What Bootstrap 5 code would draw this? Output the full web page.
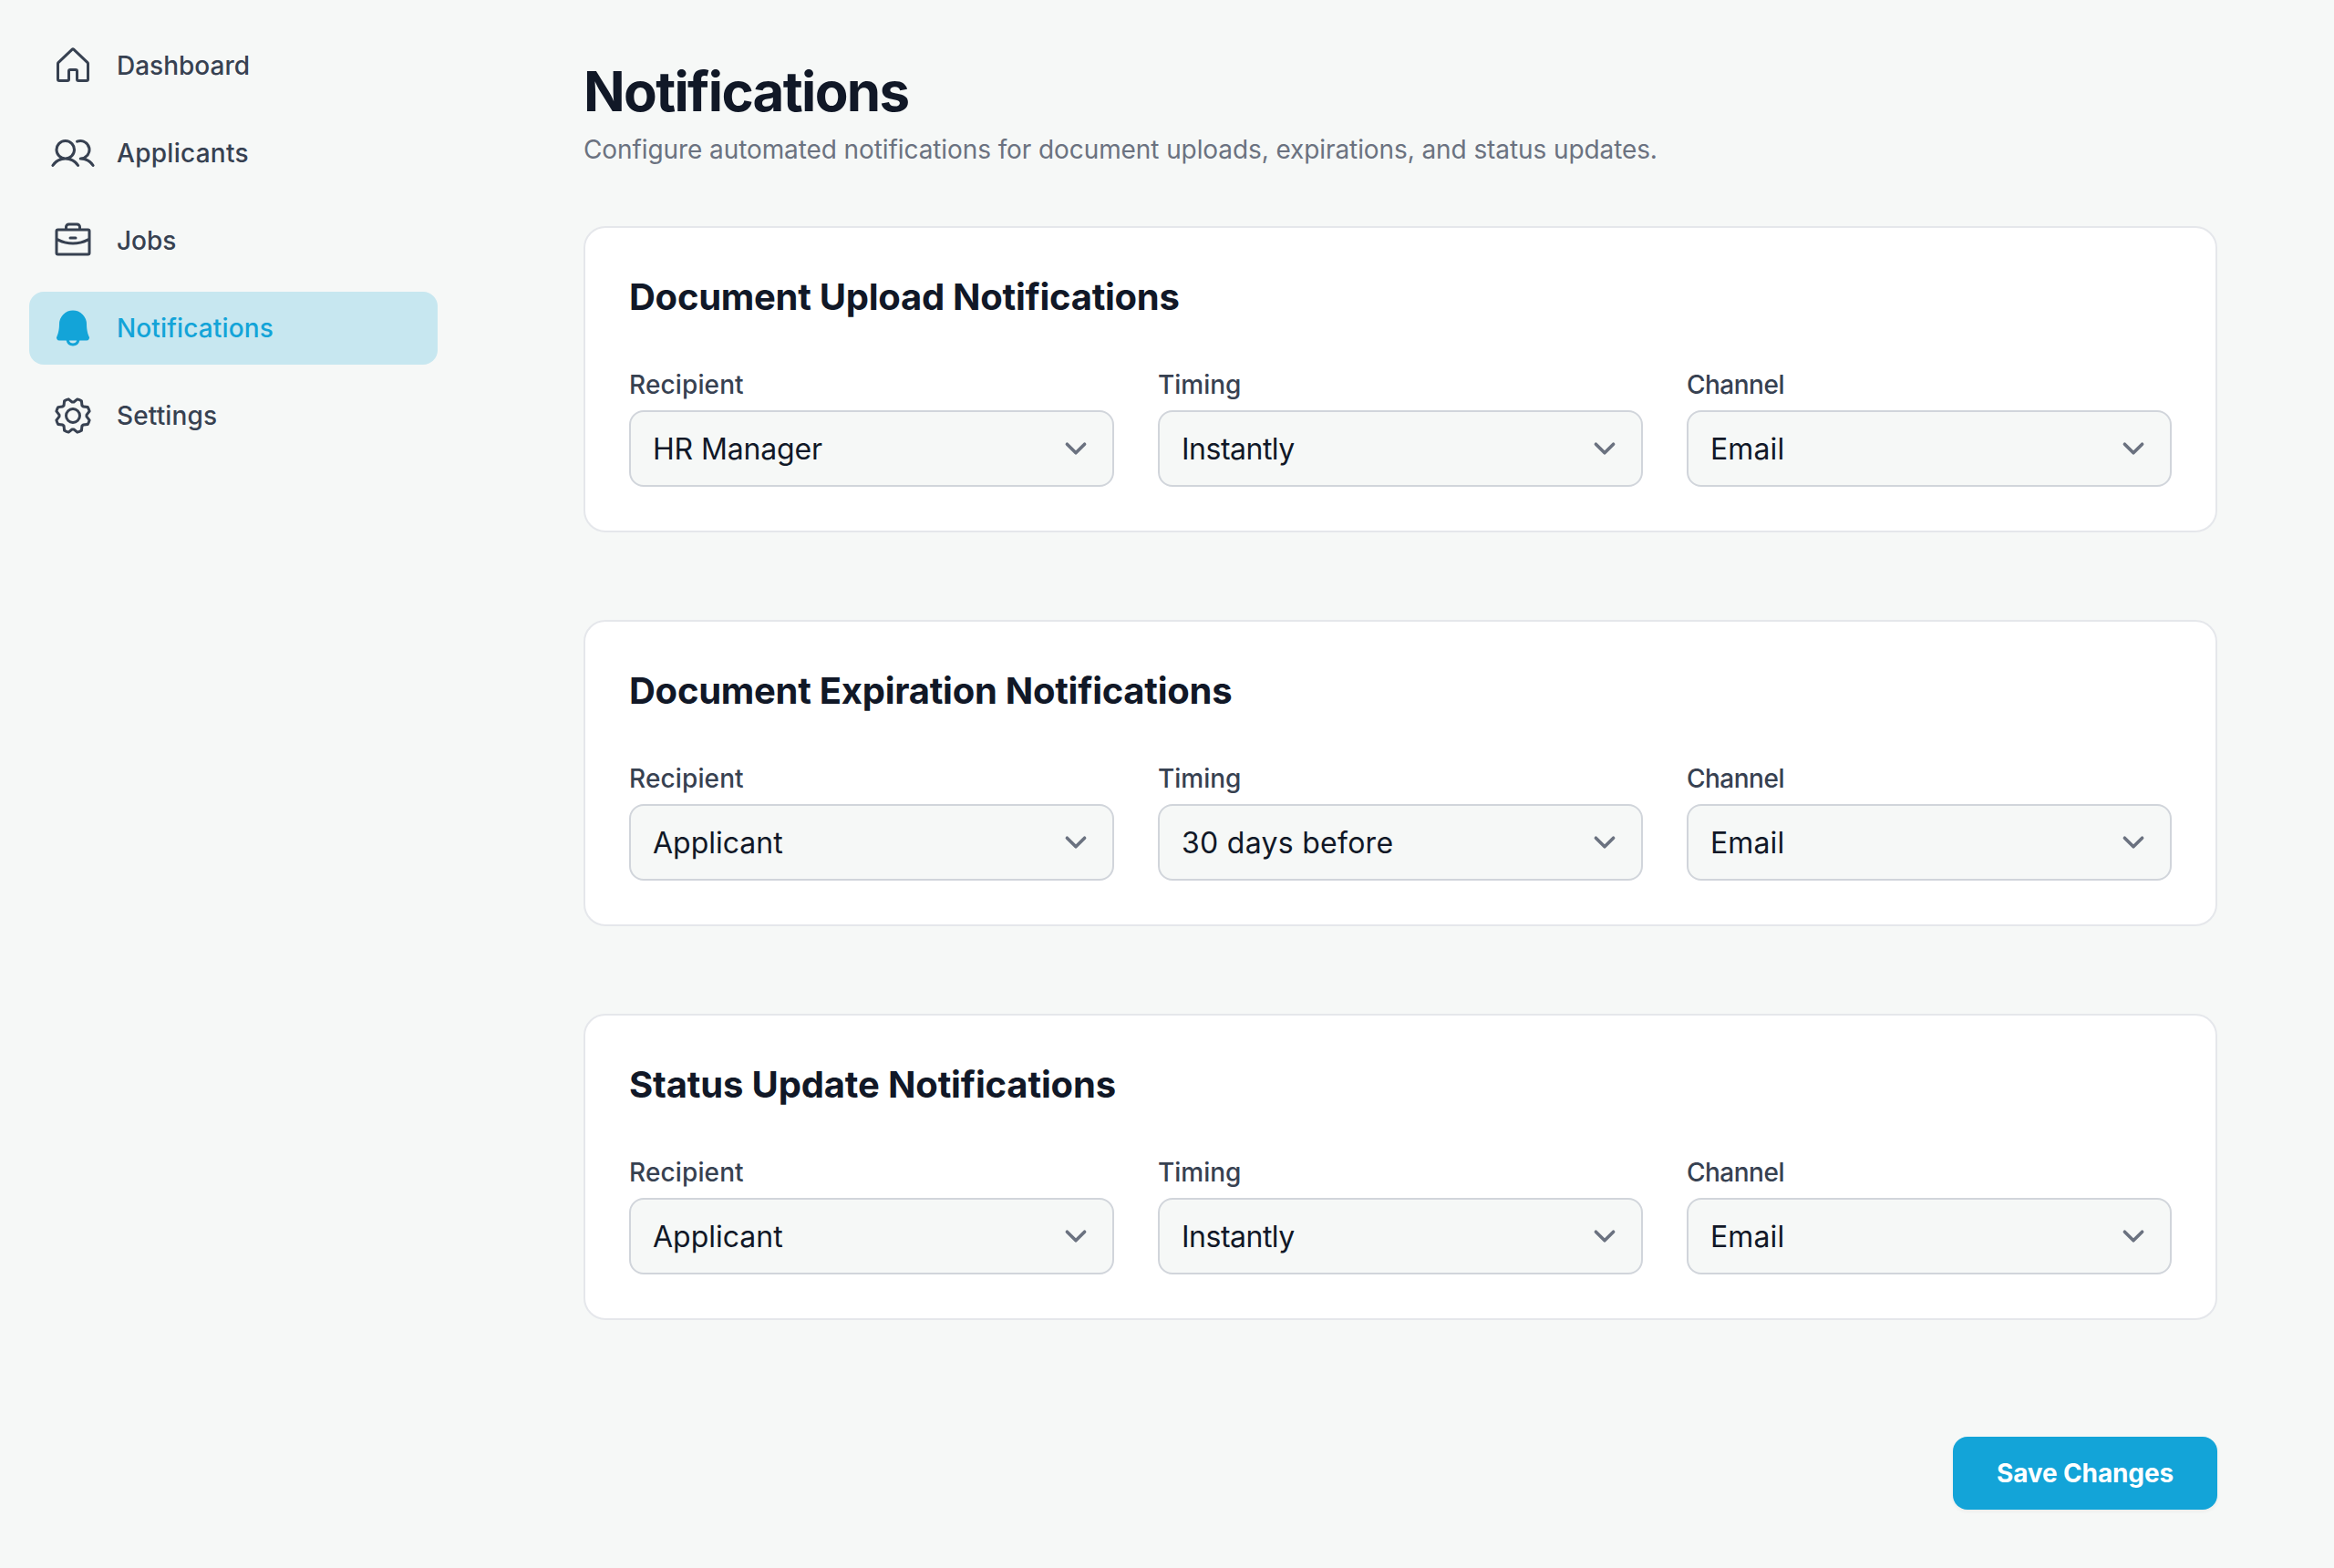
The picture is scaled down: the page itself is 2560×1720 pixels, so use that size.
<!DOCTYPE html>
<html lang="en">
<head>
<meta charset="utf-8">
<meta name="viewport" content="width=device-width, initial-scale=1">
<title>Notifications</title>
<link href="https://cdn.jsdelivr.net/npm/bootstrap@5.3.0/dist/css/bootstrap.min.css" rel="stylesheet">
<style>
  :root { --accent: #13a4d8; --ink: #111827; --slate: #374151; --muted: #6b7280; --canvas: #f6f8f7; }
  body { font-family: Inter, "Liberation Sans", sans-serif; background: var(--canvas); color: var(--ink); font-size: 28px; line-height: 40px; }
  .side { width: 512px; padding: 32px; }
  .side .nav { gap: 16px; }
  .side .nav-link { display: flex; align-items: center; gap: 24px; height: 80px; padding: 0 24px; border-radius: 16px; color: var(--slate); font-weight: 500; }
  .side .nav-link.active { background: #c7e7f0; color: var(--accent); }
  .side svg { width: 48px; height: 48px; fill: currentColor; flex: none; }
  .content { padding: 64px 128px; }
  .page-title { font-size: 60px; line-height: 72px; font-weight: 700; letter-spacing: -1.67px; margin: 0 0 8px; }
  .page-sub { color: var(--muted); margin: 0 0 64px; letter-spacing: -0.09px; }
  .stack { gap: 96px; }
  .panel { border: 2px solid #e5e7eb; border-radius: 24px; background: #fff; color: var(--ink); }
  .panel .card-body { padding: 48px; }
  .panel-title { font-size: 40px; line-height: 56px; font-weight: 700; letter-spacing: -0.27px; margin: 0 0 48px; }
  .fields { --bs-gutter-x: 48px; }
  .fields .form-label { display: block; margin: 0 0 8px; color: var(--slate); font-weight: 500; }
  .fields .form-select { height: 84px; padding: 17px 80px 15px 24px; border: 2px solid #d1d5db; border-radius: 16px; font-size: 32px; line-height: 48px; color: var(--ink); background-color: var(--canvas); background-position: right 16px center; background-size: 48px 48px;
    background-image: url("data:image/svg+xml,%3csvg xmlns='http://www.w3.org/2000/svg' fill='none' viewBox='0 0 20 20'%3e%3cpath stroke='%236b7280' stroke-linecap='round' stroke-linejoin='round' stroke-width='1.5' d='M6 8l4 4 4-4'/%3e%3c/svg%3e"); }
  .actions { margin-top: 128px; }
  .btn-save { background: var(--accent); color: #fff; border: 0; border-radius: 16px; height: 80px; padding: 0 48px; font-size: 28px; line-height: 40px; font-weight: 700; letter-spacing: -0.13px; box-shadow: 0 2px 4px rgba(0,0,0,.05); }
  /* tracking steps */
  .tk-n5.tk-n5 { letter-spacing: -0.5px; }
  .tk-n2.tk-n2 { letter-spacing: -0.16px; }
  .tk-p1.tk-p1 { letter-spacing: 0.13px; }
  .tk-p3.tk-p3 { letter-spacing: 0.28px; }
</style>
<script src="https://cdn.jsdelivr.net/npm/bootstrap@5.3.0/dist/js/bootstrap.bundle.min.js"></script>
</head>
<body>
<div class="d-flex min-vh-100">
  <aside class="side flex-shrink-0">
    <nav class="nav flex-column">
      <a class="nav-link" href="#"><svg viewBox="0 0 256 256"><path d="M218.83,103.77l-80-75.48a1.14,1.14,0,0,1-.11-.11,16,16,0,0,0-21.53,0l-.11.11L37.17,103.77A16,16,0,0,0,32,115.55V208a16,16,0,0,0,16,16H96a16,16,0,0,0,16-16V160h32v48a16,16,0,0,0,16,16h48a16,16,0,0,0,16-16V115.55A16,16,0,0,0,218.83,103.77ZM208,208H160V160a16,16,0,0,0-16-16H112a16,16,0,0,0-16,16v48H48V115.55l.11-.1L128,40l79.9,75.43.11.1Z"/></svg><span>Dashboard</span></a>
      <a class="nav-link" href="#"><svg viewBox="0 0 256 256"><path d="M117.25,157.92a60,60,0,1,0-66.5,0A95.83,95.83,0,0,0,3.53,195.63a8,8,0,1,0,13.4,8.74,80,80,0,0,1,134.14,0,8,8,0,0,0,13.4-8.74A95.83,95.83,0,0,0,117.25,157.92ZM40,108a44,44,0,1,1,44,44A44.05,44.05,0,0,1,40,108Zm210.14,98.7a8,8,0,0,1-11.07-2.33A79.83,79.83,0,0,0,172,168a8,8,0,0,1,0-16,44,44,0,1,0-16.34-84.87,8,8,0,1,1-5.94-14.85,60,60,0,0,1,55.53,105.64,95.83,95.83,0,0,1,47.22,37.71A8,8,0,0,1,250.14,206.7Z"/></svg><span class="tk-p3">Applicants</span></a>
      <a class="nav-link" href="#"><svg viewBox="0 0 256 256"><path d="M216,56H176V48a24,24,0,0,0-24-24H104A24,24,0,0,0,80,48v8H40A16,16,0,0,0,24,72V200a16,16,0,0,0,16,16H216a16,16,0,0,0,16-16V72A16,16,0,0,0,216,56ZM96,48a8,8,0,0,1,8-8h48a8,8,0,0,1,8,8v8H96ZM216,72v41.61A184,184,0,0,1,128,136a184.07,184.07,0,0,1-88-22.38V72Zm0,128H40V131.64A200.19,200.19,0,0,0,128,152a200.25,200.25,0,0,0,88-20.37V200ZM104,112a8,8,0,0,1,8-8h32a8,8,0,0,1,0,16H112A8,8,0,0,1,104,112Z"/></svg><span>Jobs</span></a>
      <a class="nav-link active" href="#" aria-current="page"><svg viewBox="0 0 256 256"><path d="M221.8,175.94C216.25,166.38,208,139.33,208,104a80,80,0,1,0-160,0c0,35.34-8.26,62.38-13.81,71.94A16,16,0,0,0,48,200H88.81a40,40,0,0,0,78.38,0H208a16,16,0,0,0,13.8-24.06ZM128,216a24,24,0,0,1-22.62-16h45.24A24,24,0,0,1,128,216Z"/></svg><span class="tk-p1">Notifications</span></a>
      <a class="nav-link" href="#"><svg viewBox="0 0 256 256"><path d="M128,80a48,48,0,1,0,48,48A48.05,48.05,0,0,0,128,80Zm0,80a32,32,0,1,1,32-32A32,32,0,0,1,128,160Zm88-29.84q.06-2.16,0-4.32l14.92-18.64a8,8,0,0,0,1.48-7.06,107.21,107.21,0,0,0-10.88-26.25,8,8,0,0,0-6-3.93l-23.72-2.64q-1.48-1.56-3-3L186,40.54a8,8,0,0,0-3.94-6,107.71,107.71,0,0,0-26.25-10.87,8,8,0,0,0-7.06,1.49L130.16,40Q128,40,125.84,40L107.2,25.11a8,8,0,0,0-7.06-1.48A107.6,107.6,0,0,0,73.89,34.51a8,8,0,0,0-3.93,6L67.32,64.27q-1.56,1.49-3,3L40.54,70a8,8,0,0,0-6,3.94,107.71,107.71,0,0,0-10.87,26.25,8,8,0,0,0,1.49,7.06L40,125.84Q40,128,40,130.16L25.11,148.8a8,8,0,0,0-1.48,7.06,107.21,107.21,0,0,0,10.88,26.25,8,8,0,0,0,6,3.93l23.72,2.64q1.49,1.56,3,3L70,215.46a8,8,0,0,0,3.94,6,107.71,107.71,0,0,0,26.25,10.87,8,8,0,0,0,7.06-1.49L125.84,216q2.16.06,4.32,0l18.64,14.92a8,8,0,0,0,7.06,1.48,107.21,107.21,0,0,0,26.25-10.88,8,8,0,0,0,3.93-6l2.64-23.72q1.56-1.48,3-3L215.46,186a8,8,0,0,0,6-3.94,107.71,107.71,0,0,0,10.87-26.25,8,8,0,0,0-1.49-7.06Zm-16.1-6.5a73.93,73.93,0,0,1,0,8.68,8,8,0,0,0,1.74,5.48l14.19,17.73a91.57,91.57,0,0,1-6.23,15L187,173.11a8,8,0,0,0-5.1,2.64,74.11,74.11,0,0,1-6.14,6.14,8,8,0,0,0-2.64,5.1l-2.51,22.58a91.32,91.32,0,0,1-15,6.23l-17.74-14.19a8,8,0,0,0-5-1.75h-.48a73.93,73.93,0,0,1-8.68,0,8,8,0,0,0-5.48,1.74L100.45,215.8a91.57,91.57,0,0,1-15-6.23L82.89,187a8,8,0,0,0-2.64-5.1,74.11,74.11,0,0,1-6.14-6.14,8,8,0,0,0-5.1-2.64L46.43,170.6a91.32,91.32,0,0,1-6.23-15l14.19-17.74a8,8,0,0,0,1.74-5.48,73.93,73.93,0,0,1,0-8.68,8,8,0,0,0-1.74-5.48L40.2,100.45a91.57,91.57,0,0,1,6.23-15L69,82.89a8,8,0,0,0,5.1-2.64,74.11,74.11,0,0,1,6.14-6.14A8,8,0,0,0,82.89,69L85.4,46.43a91.32,91.32,0,0,1,15-6.23l17.74,14.19a8,8,0,0,0,5.48,1.74,73.93,73.93,0,0,1,8.68,0,8,8,0,0,0,5.48-1.74L155.55,40.2a91.57,91.57,0,0,1,15,6.23L173.11,69a8,8,0,0,0,2.64,5.1,74.11,74.11,0,0,1,6.14,6.14,8,8,0,0,0,5.1,2.64l22.58,2.51a91.32,91.32,0,0,1,6.23,15l-14.19,17.74A8,8,0,0,0,199.87,123.66Z"/></svg><span class="tk-p1">Settings</span></a>
    </nav>
  </aside>
  <main class="content flex-grow-1">
    <h1 class="page-title">Notifications</h1>
    <p class="page-sub">Configure automated notifications for document uploads, expirations, and status updates.</p>
    <form>
      <div class="stack d-flex flex-column">
        <section class="card panel"><div class="card-body">
          <h2 class="panel-title">Document Upload Notifications</h2>
          <div class="row fields">
            <div class="col-4"><label class="form-label tk-p1" for="u1">Recipient</label><select class="form-select tk-n2" id="u1"><option>HR Manager</option></select></div>
            <div class="col-4"><label class="form-label" for="u2">Timing</label><select class="form-select tk-n5" id="u2"><option>Instantly</option></select></div>
            <div class="col-4"><label class="form-label tk-n5" for="u3">Channel</label><select class="form-select tk-p1" id="u3"><option>Email</option></select></div>
          </div>
        </div></section>
        <section class="card panel"><div class="card-body">
          <h2 class="panel-title">Document Expiration Notifications</h2>
          <div class="row fields">
            <div class="col-4"><label class="form-label tk-p1" for="e1">Recipient</label><select class="form-select" id="e1"><option>Applicant</option></select></div>
            <div class="col-4"><label class="form-label" for="e2">Timing</label><select class="form-select tk-p3" id="e2"><option>30 days before</option></select></div>
            <div class="col-4"><label class="form-label tk-n5" for="e3">Channel</label><select class="form-select tk-p1" id="e3"><option>Email</option></select></div>
          </div>
        </div></section>
        <section class="card panel"><div class="card-body">
          <h2 class="panel-title tk-n2">Status Update Notifications</h2>
          <div class="row fields">
            <div class="col-4"><label class="form-label tk-p1" for="s1">Recipient</label><select class="form-select" id="s1"><option>Applicant</option></select></div>
            <div class="col-4"><label class="form-label" for="s2">Timing</label><select class="form-select tk-n5" id="s2"><option>Instantly</option></select></div>
            <div class="col-4"><label class="form-label tk-n5" for="s3">Channel</label><select class="form-select tk-p1" id="s3"><option>Email</option></select></div>
          </div>
        </div></section>
      </div>
      <div class="actions d-flex justify-content-end">
        <button type="button" class="btn btn-save">Save Changes</button>
      </div>
    </form>
  </main>
</div>
</body>
</html>
